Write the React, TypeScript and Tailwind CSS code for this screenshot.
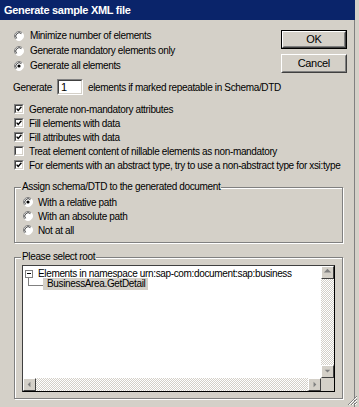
import React from "react";

const Radio = ({ checked }: { checked?: boolean }) => (
  <svg width="10" height="10" viewBox="0 0 10 10" className="shrink-0">
    <circle cx="5" cy="5" r="4.5" fill="#fff" />
    <path d="M1.8 8.2 A4.5 4.5 0 0 1 8.2 1.8" fill="none" stroke="#808080" strokeWidth="1" />
    <path d="M8.2 1.8 A4.5 4.5 0 0 1 1.8 8.2" fill="none" stroke="#ffffff" strokeWidth="1" />
    <path d="M2.6 7.4 A3.4 3.4 0 0 1 7.4 2.6" fill="none" stroke="#404040" strokeWidth="1" />
    {checked && <circle cx="5" cy="5" r="1.6" fill="#000" />}
  </svg>
);

const Check = ({ checked }: { checked?: boolean }) => (
  <div className="w-[10px] h-[10px] shrink-0 border border-t-[#808080] border-l-[#808080] border-b-white border-r-white">
    <div className="w-full h-full bg-white border border-t-[#404040] border-l-[#404040] border-b-[#d4d0c8] border-r-[#d4d0c8] flex items-center justify-center">
      {checked && (
        <svg width="6" height="6" viewBox="0 0 6 6">
          <path d="M0.6 2.6 L2.2 4.4 L5.4 0.8" fill="none" stroke="#000" strokeWidth="1.4" />
        </svg>
      )}
    </div>
  </div>
);

const Btn = ({ label, def }: { label: string; def?: boolean }) => (
  <div className={"w-[66px] h-[19px] " + (def ? "border border-black" : "")}>
    <div className="w-full h-full border border-t-white border-l-white border-b-[#404040] border-r-[#404040]">
      <div className="w-full h-full border border-t-[#d4d0c8] border-l-[#d4d0c8] border-b-[#808080] border-r-[#808080] flex items-center justify-center text-[11px]">
        {label}
      </div>
    </div>
  </div>
);

const ScrollBtn = ({ dir }: { dir: "up" | "down" | "left" | "right" }) => {
  const pts: Record<string, string> = {
    up: "2,6 6,2 10,6",
    down: "3,4 9,4 6,7",
    left: "7,3 7,9 4,6",
    right: "5,3 5,9 8,6",
  };
  return (
    <div className="w-[13px] h-[13px] shrink-0 border border-t-white border-l-white border-b-[#404040] border-r-[#404040] bg-[#d4d0c8]">
      <svg width="11" height="11" viewBox="0 0 12 12" className="block">
        <polygon points={pts[dir]} fill="#808080" />
      </svg>
    </div>
  );
};

const Group = ({ legend, className, children }: { legend: string; className: string; children: React.ReactNode }) => (
  <div className={"relative border border-[#808080] shadow-[inset_1px_1px_0_#fff,1px_1px_0_#fff] " + className}>
    <span className="absolute left-[6px] top-[-7px] bg-[#d4d0c8] px-[1px] leading-[12px] whitespace-nowrap">{legend}</span>
    {children}
  </div>
);

export default function App() {
  return (
    <div className="relative w-[359px] h-[407px] bg-[#d4d0c8] overflow-hidden text-black text-[10px] tracking-[-0.35px] font-['Liberation_Sans',Arial,sans-serif]">
      <div className="h-[20px] w-[355px] bg-[#0a246a] text-white font-bold text-[11px] tracking-[-0.3px] leading-[20px] pl-[4px]">
        Generate sample XML file
      </div>
      <div className="w-[355px] h-[387px] border-r border-[#808080]">
        <div className="flex">
          <div className="flex-1 pl-[14px] pt-[8px]">
            {[
              ["Minimize number of elements", false],
              ["Generate mandatory elements only", false],
              ["Generate all elements", true],
            ].map(([t, c], i) => (
              <div key={i} className="h-[15px] flex items-center gap-[6px]">
                <Radio checked={c as boolean} />
                <span className="whitespace-nowrap">{t as string}</span>
              </div>
            ))}
            <div className="mt-[6px] h-[16px] flex items-center -ml-[1px]">
              <span className="w-[44px] shrink-0">Generate</span>
              <div className="w-[26px] h-[16px] shrink-0 border border-t-[#808080] border-l-[#808080] border-b-white border-r-white">
                <div className="w-full h-full bg-white border border-t-[#404040] border-l-[#404040] border-b-[#d4d0c8] border-r-[#d4d0c8] pl-[2px] text-[11px] leading-[12px]">
                  1
                </div>
              </div>
              <span className="ml-[5px] whitespace-nowrap">elements if marked repeatable in Schema/DTD</span>
            </div>
          </div>
          <div className="pt-[10px] pr-[8px] flex flex-col gap-[5px]">
            <Btn label="OK" def />
            <Btn label="Cancel" />
          </div>
        </div>
        <div className="pl-[14px] mt-[7px]">
          {[
            ["Generate non-mandatory attributes", true],
            ["Fill elements with data", true],
            ["Fill attributes with data", true],
            ["Treat element content of nillable elements as non-mandatory", false],
            ["For elements with an abstract type, try to use a non-abstract type for xsi:type", true],
          ].map(([t, c], i) => (
            <div key={i} className="h-[14px] flex items-center gap-[5px]">
              <Check checked={c as boolean} />
              <span className="whitespace-nowrap">{t as string}</span>
            </div>
          ))}
        </div>
        <Group legend="Assign schema/DTD to the generated document" className="ml-[14px] mt-[15px] w-[329px] h-[56px] pt-[7px]">
          {[
            ["With a relative path", true],
            ["With an absolute path", false],
            ["Not at all", false],
          ].map(([t, c], i) => (
            <div key={i} className="h-[14px] flex items-center gap-[5px] pl-[8px]">
              <Radio checked={c as boolean} />
              <span>{t as string}</span>
            </div>
          ))}
        </Group>
        <Group legend="Please select root" className="ml-[14px] mt-[14px] w-[329px] h-[142px] pt-[7px] pl-[7px]">
          <div className="w-[313px] h-[127px] border border-t-[#404040] border-l-[#404040] border-b-black border-r-black bg-white flex flex-col">
            <div className="flex flex-1 min-h-0">
              <div className="flex-1">
                <div className="h-[9px] mt-[3px] flex items-center">
                  <div className="ml-[2px] w-[8px] h-[8px] border border-[#808080] bg-white flex items-center justify-center">
                    <div className="w-[4px] h-[1px] bg-black" />
                  </div>
                  <span className="ml-[5px] whitespace-nowrap">Elements in namespace urn:sap-com:document:sap:business</span>
                </div>
                <div className="h-[12px] flex items-start">
                  <div className="ml-[5px] -mt-[1px] w-[15px] h-[9px] border-l border-b border-[#808080]" />
                  <span className="bg-[#d4d0c8] h-[12px] leading-[12px] pl-[4px] pr-[3px] whitespace-nowrap">
                    BusinessArea.GetDetail
                  </span>
                </div>
              </div>
              <div className="w-[13px] flex flex-col">
                <ScrollBtn dir="up" />
                <div className="flex-1 bg-[repeating-conic-gradient(#d4d0c8_0_25%,#ffffff_0_50%)] bg-[length:2px_2px]" />
                <ScrollBtn dir="down" />
              </div>
            </div>
            <div className="h-[13px] flex">
              <ScrollBtn dir="left" />
              <div className="flex-1 bg-[repeating-conic-gradient(#d4d0c8_0_25%,#ffffff_0_50%)] bg-[length:2px_2px]" />
              <ScrollBtn dir="right" />
              <div className="w-[13px] bg-[#d4d0c8]" />
            </div>
          </div>
        </Group>
      </div>
      <svg width="11" height="11" viewBox="0 0 11 11" className="absolute right-[1px] bottom-[1px]">
        <path d="M10 1 L1 10 M10 4 L4 10 M10 7 L7 10" stroke="#808080" strokeWidth="1" />
        <path d="M10 2 L2 10 M10 5 L5 10 M10 8 L8 10" stroke="#ffffff" strokeWidth="1" />
      </svg>
    </div>
  );
}
